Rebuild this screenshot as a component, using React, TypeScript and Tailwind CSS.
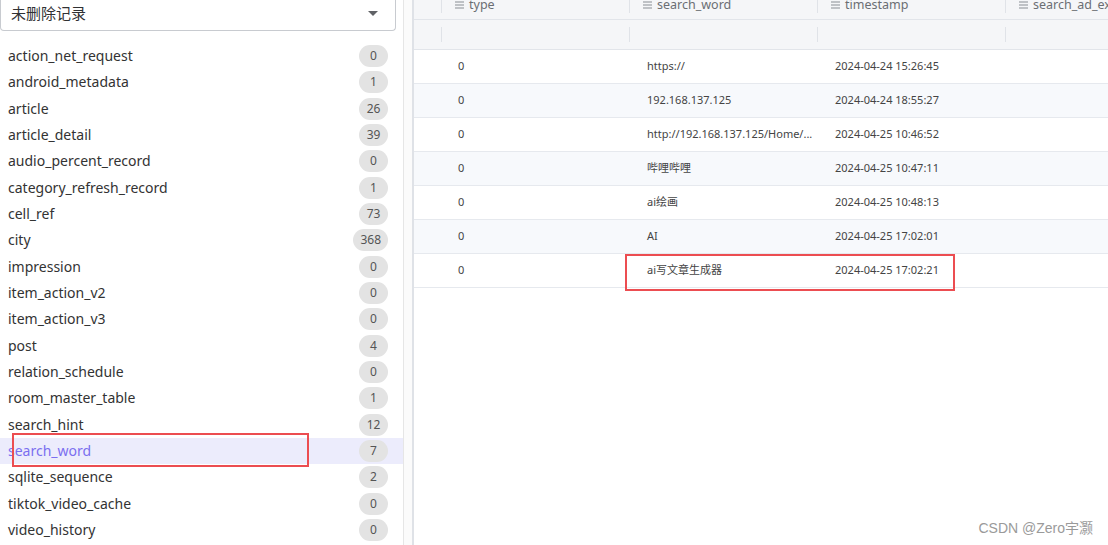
import React from "react";

const tables: [string, number][] = [
  ["action_net_request", 0],
  ["android_metadata", 1],
  ["article", 26],
  ["article_detail", 39],
  ["audio_percent_record", 0],
  ["category_refresh_record", 1],
  ["cell_ref", 73],
  ["city", 368],
  ["impression", 0],
  ["item_action_v2", 0],
  ["item_action_v3", 0],
  ["post", 4],
  ["relation_schedule", 0],
  ["room_master_table", 1],
  ["search_hint", 12],
  ["search_word", 7],
  ["sqlite_sequence", 2],
  ["tiktok_video_cache", 0],
  ["video_history", 0],
];

const rows: [string, string, string][] = [
  ["0", "https://", "2024-04-24 15:26:45"],
  ["0", "192.168.137.125", "2024-04-24 18:55:27"],
  ["0", "http://192.168.137.125/Home/...", "2024-04-25 10:46:52"],
  ["0", "哔哩哔哩", "2024-04-25 10:47:11"],
  ["0", "ai绘画", "2024-04-25 10:48:13"],
  ["0", "AI", "2024-04-25 17:02:01"],
  ["0", "ai写文章生成器", "2024-04-25 17:02:21"],
];

const cols = ["type", "search_word", "timestamp", "search_ad_extra"];

function MenuIcon() {
  return (
    <svg width="9" height="8" viewBox="0 0 9 8" className="shrink-0">
      <rect x="0" y="0.5" width="9" height="1" fill="#8a8d93" />
      <rect x="0" y="3.5" width="9" height="1" fill="#8a8d93" />
      <rect x="0" y="6.5" width="9" height="1" fill="#8a8d93" />
    </svg>
  );
}

export default function App() {
  const font = { fontFamily: '"Noto Sans", "Noto Sans CJK SC", sans-serif' };
  return (
    <div
      className="relative flex h-[545px] w-[1108px] overflow-hidden bg-white"
      style={font}
    >
      {/* Left panel */}
      <div className="flex w-[404px] shrink-0 flex-col border-r border-[#e6e6e6]">
        <div className="mr-[7px] flex h-[31px] items-center justify-between rounded-b-[4px] border border-t-0 border-[#c8cbd0] pb-[3px] pl-[10px] pr-[17px]">
          <span className="text-[15px] text-[#303133]">未删除记录</span>
          <svg width="10" height="5" viewBox="0 0 10 5">
            <path d="M0 0 L10 0 L5 5 Z" fill="#606266" />
          </svg>
        </div>
        <div className="mt-[12px] flex flex-col">
          {tables.map(([name, n]) => {
            const sel = name === "search_word";
            return (
              <div
                key={name}
                className={`flex h-[26.33px] shrink-0 items-center justify-between pl-[8px] pr-[15px] ${
                  sel ? "bg-[#ececfc]" : ""
                }`}
              >
                <span
                  className={`text-[14px] leading-none ${
                    sel ? "text-[#7b6ff0]" : "text-[#333]"
                  }`}
                >
                  {name}
                </span>
                <span className="flex h-[22px] min-w-[29px] items-center justify-center rounded-full bg-[#e3e3e3] px-[7px] text-[12px] text-[#555]">
                  {n}
                </span>
              </div>
            );
          })}
        </div>
      </div>

      {/* Divider */}
      <div className="w-[8px] shrink-0 bg-[#fbfbfb]" />

      {/* Right panel */}
      <div className="flex min-w-0 flex-1 flex-col border-l-2 border-[#dfe2e7]">
        {/* header */}
        <div className="-mt-[9px] grid h-[29px] shrink-0 grid-cols-[27px_188px_188px_188px_1fr] border-b border-[#e2e5ea] bg-[#f5f6f8]">
          <div />
          {cols.map((c) => (
            <div key={c} className="flex items-center overflow-hidden whitespace-nowrap">
              <div className="h-[16px] w-px shrink-0 bg-[#e0e3e8]" />
              <div className="ml-[13px] flex items-center gap-[5px] text-[12.5px] text-[#6b6e73]">
                <MenuIcon />
                <span>{c}</span>
              </div>
            </div>
          ))}
        </div>
        {/* filter row */}
        <div className="grid h-[30px] shrink-0 grid-cols-[27px_188px_188px_188px_1fr] border-b border-[#e2e5ea] bg-[#f5f6f8]">
          <div />
          {cols.map((c) => (
            <div key={c} className="flex items-center">
              <div className="h-[15px] w-px bg-[#e0e3e8]" />
            </div>
          ))}
        </div>
        {/* data rows */}
        {rows.map(([t, w, ts], i) => (
          <div
            key={i}
            className={`grid h-[34px] shrink-0 grid-cols-[27px_188px_188px_188px_1fr] items-center border-b border-[#e6e9ee] text-[11px] text-[#444] ${
              i % 2 === 1 ? "bg-[#f7f9fc]" : "bg-white"
            }`}
          >
            <div />
            <div className="pl-[17px]">{t}</div>
            <div className="truncate pl-[18px]">{w}</div>
            <div className="pl-[18px]">{ts}</div>
            <div />
          </div>
        ))}
      </div>

      {/* annotation boxes */}
      <div className="absolute left-[12px] top-[433px] h-[34px] w-[297px] border-2 border-[#ec4d51]" />
      <div className="absolute left-[625px] top-[254px] h-[37px] w-[330px] border-2 border-[#ec4d51]" />

      {/* watermark */}
      <div
        className="absolute right-[15px] top-[518px] text-[14px] text-[#9a9a9a]"
        style={{ fontFamily: '"Liberation Sans", "Noto Sans CJK SC", sans-serif' }}
      >
        CSDN @Zero宇灏
      </div>
    </div>
  );
}
